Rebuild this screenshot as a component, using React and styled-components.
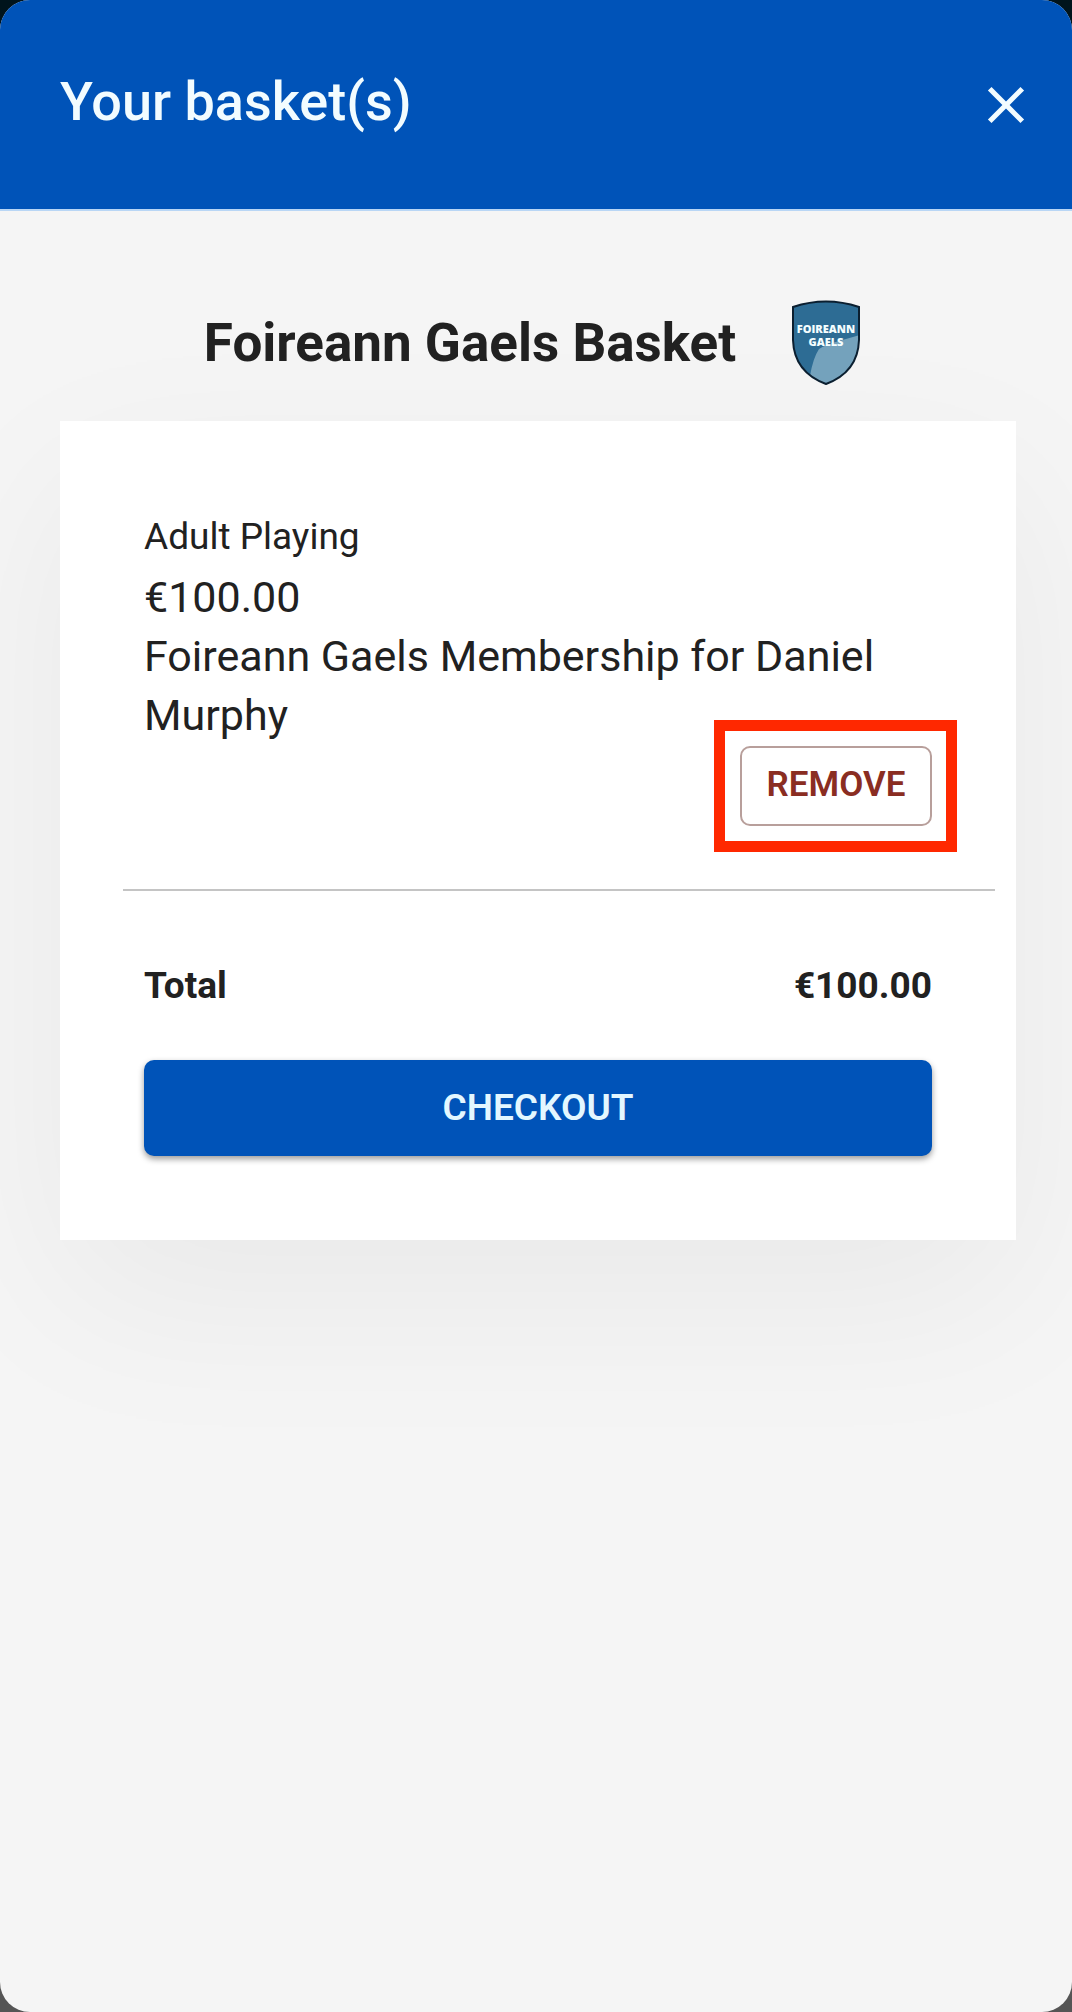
import styled, { createGlobalStyle } from "styled-components";

const GlobalStyle = createGlobalStyle`
    * {
        box-sizing: border-box;
    }
    body {
        margin: 0;
        background: linear-gradient(#00141c 50%, #555 50%);
        font-family: Roboto, "Liberation Sans", sans-serif;
        color: #212121;
    }
    h1, h2, h3, p, dl, dd {
        margin: 0;
    }
`;

const Drawer = styled.div`
    display: flex;
    flex-direction: column;
    min-height: 100vh;
    overflow: hidden;
    border-radius: 30px;
    background: #f5f5f5;
`;

const Header = styled.header`
    display: flex;
    align-items: center;
    justify-content: space-between;
    height: 211px;
    padding: 0 35px 0 60px;
    border-bottom: 2px solid #b9d6f5;
    background: #0053b8;
    color: #f2fcff;
`;

const Title = styled.h1`
    padding-bottom: 6px;
    font-size: 54px;
    line-height: 64px;
    font-weight: 500;
`;

const CloseButton = styled.button`
    display: flex;
    padding: 0;
    border: 0;
    background: none;
    color: inherit;
    cursor: pointer;
`;

const Content = styled.main`
    padding: 84px 56px 84px 60px;
`;

const BasketHeading = styled.div`
    display: flex;
    align-items: center;
    justify-content: center;
    gap: 56px;
    padding: 5px 12px 35px 0;
`;

const BasketName = styled.h2`
    font-size: 53px;
    line-height: 64px;
    font-weight: 700;
`;

const Card = styled.section`
    padding: 84px;
    background: #fff;
    box-shadow: 0 60px 170px rgba(0, 0, 0, 0.05);
`;

const ItemName = styled.h3`
    font-size: 37px;
    line-height: 63px;
    font-weight: 400;
`;

const ItemText = styled.p`
    font-size: 43px;
    line-height: 59px;
`;

const ItemActions = styled.div`
    display: flex;
    justify-content: flex-end;
    padding-top: 1px;
`;

const Highlight = styled.div`
    position: relative;

    &::after {
        content: "";
        position: absolute;
        inset: -26px -25px -26px -26px;
        border: 11px solid #ff2800;
        pointer-events: none;
    }
`;

const RemoveButton = styled.button`
    height: 80px;
    min-width: 192px;
    padding: 0 20px 4px;
    border: 2px solid #b89f9b;
    border-radius: 10px;
    background: #fff;
    color: #8a2d22;
    font-family: inherit;
    font-size: 35px;
    font-weight: 600;
    cursor: pointer;
`;

const Divider = styled.hr`
    margin: 63px -63px 63px -21px;
    border: 0;
    border-top: 2px solid #c4c4c4;
`;

const Total = styled.dl`
    display: flex;
    justify-content: space-between;
    padding-bottom: 42px;
    font-size: 37px;
    line-height: 64px;
    font-weight: 700;
`;

const CheckoutButton = styled.button`
    display: block;
    width: 100%;
    height: 96px;
    padding: 0 0 2px;
    border: 0;
    border-radius: 10px;
    background: #0053b8;
    box-shadow: 0 3px 6px rgba(0, 0, 0, 0.4);
    color: #e3f7ff;
    font-family: inherit;
    font-size: 37px;
    font-weight: 600;
    cursor: pointer;
`;

const CloseIcon = () => (
    <svg width="62" height="62" viewBox="0 0 24 24" fill="currentColor" aria-hidden="true">
        <path d="M19 6.4 17.6 5 12 10.6 6.4 5 5 6.4 10.6 12 5 17.6 6.4 19 12 13.4 17.6 19 19 17.6 13.4 12z" />
    </svg>
);

const Crest = () => (
    <svg width="68" height="86" viewBox="0 0 68 86" role="img" aria-label="Foireann Gaels crest">
        <clipPath id="shield">
            <path d="M1 7Q34-4 67 7V40Q66 72 34 84Q2 72 1 40Z" />
        </clipPath>
        <g clipPath="url(#shield)">
            <rect width="68" height="86" fill="#2d6c94" />
            <path d="M68 35 47 41Q35 44 27 49Q21 58 18 76L34 86H68Z" fill="#74a2bc" />
        </g>
        <path d="M1 7Q34-4 67 7V40Q66 72 34 84Q2 72 1 40Z" fill="none" stroke="#0b1f30" strokeWidth="2" />
        <g fill="#f4feff" fontFamily="Open Sans, sans-serif" fontSize="11" fontWeight="800" textAnchor="middle">
            <text x="34" y="33">FOIREANN</text>
            <text x="34" y="46">GAELS</text>
        </g>
    </svg>
);

const BasketItem = ({ name, price, description }) => (
    <article>
        <ItemName>{name}</ItemName>
        <ItemText>{price}</ItemText>
        <ItemText>{description}</ItemText>
        <ItemActions>
            <Highlight>
                <RemoveButton type="button">REMOVE</RemoveButton>
            </Highlight>
        </ItemActions>
    </article>
);

const App = () => (
    <>
        <GlobalStyle />
        <Drawer>
            <Header>
                <Title>Your basket(s)</Title>
                <CloseButton type="button" aria-label="Close">
                    <CloseIcon />
                </CloseButton>
            </Header>
            <Content>
                <BasketHeading>
                    <BasketName>Foireann Gaels Basket</BasketName>
                    <Crest />
                </BasketHeading>
                <Card>
                    <BasketItem
                        name="Adult Playing"
                        price="€100.00"
                        description="Foireann Gaels Membership for Daniel Murphy"
                    />
                    <Divider />
                    <Total>
                        <dt>Total</dt>
                        <dd>€100.00</dd>
                    </Total>
                    <CheckoutButton type="button">CHECKOUT</CheckoutButton>
                </Card>
            </Content>
        </Drawer>
    </>
);

export default App;
